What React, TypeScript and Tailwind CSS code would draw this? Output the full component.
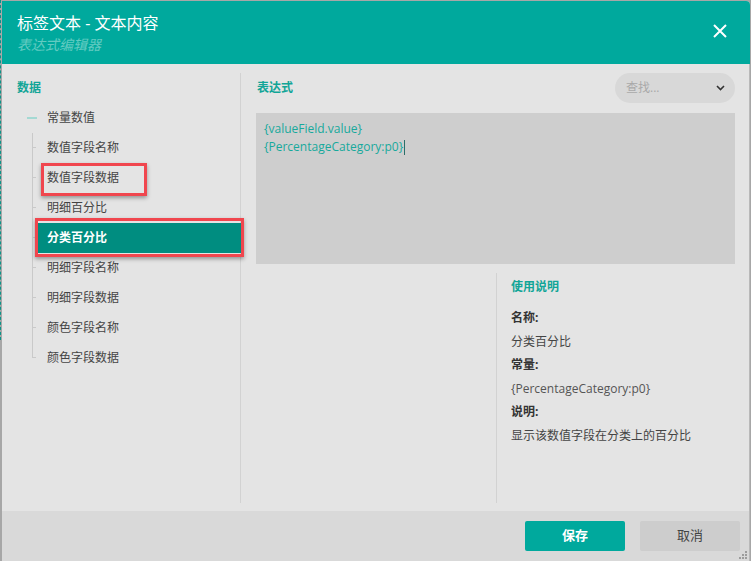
import React from 'react';

const items = [
  '数值字段名称',
  '数值字段数据',
  '明细百分比',
  '分类百分比',
  '明细字段名称',
  '明细字段数据',
  '颜色字段名称',
  '颜色字段数据',
];

function TreeItem({ label, selected, last }: { label: string; selected?: boolean; last?: boolean }) {
  return (
    <div className="flex h-[30px]">
      {/* connector */}
      <div className="ml-[30px] flex w-[4px] flex-col">
        <div className="h-[15px] border-b border-l border-[#c9c9c9]" />
        {!last && <div className="h-[15px] border-l border-[#c9c9c9]" />}
      </div>
      <div
        className={
          selected
            ? 'ml-[2px] -mr-[1px] flex flex-1 items-center bg-[#008d80] pl-[9px] text-[12px] font-bold text-white'
            : 'ml-[2px] flex flex-1 items-center pl-[9px] text-[12px] text-[#444]'
        }
      >
        {label}
      </div>
    </div>
  );
}

export default function App() {
  return (
    <div className="relative h-[561px] w-[751px] overflow-hidden bg-[#a7a7a7] font-['Open_Sans','Noto_Sans_CJK_SC',sans-serif]">
      {/* page behind the dialog */}
      <div className="absolute left-0 top-0 h-[340px] w-[2px] border-l border-dashed border-[#0a9488]" />

      <div className="ml-[2px] mt-[1px] flex h-[560px] w-[748px] flex-col overflow-hidden rounded-tr-[4px] bg-[#e4e4e4]">
        {/* header */}
        <div className="flex h-[63px] shrink-0 items-start justify-between bg-[#00a99d] pl-[15px] pr-[23px]">
          <div className="pt-[12px]">
            <div className="text-[16px] leading-[20px] text-white">标签文本 - 文本内容</div>
            <div className="mt-[2px] text-[14px] italic leading-[20px] text-[#62cbc1]">表达式编辑器</div>
          </div>
          <svg width="14" height="14" viewBox="0 0 14 14" className="mt-[23px]">
            <path d="M1 1 13 13M13 1 1 13" stroke="white" strokeWidth="2" />
          </svg>
        </div>

        {/* body */}
        <div className="flex flex-1 border-r border-[#b9b9b9] pb-[8px] pt-[9px]">
          {/* data tree */}
          <div className="w-[239px] shrink-0 border-r border-[#d2d2d2]">
            <div className="pl-[15px] pt-[7px] text-[12px] font-bold leading-[16px] text-[#12a597]">数据</div>
            <div className="mt-[7px]">
              <div className="flex h-[30px] items-center">
                <div className="ml-[25px] h-[2px] w-[10px] bg-[#a4d9d3]" />
                <div className="ml-[10px] text-[12px] text-[#444]">常量数值</div>
              </div>
              {items.map((label, i) => (
                <TreeItem key={label} label={label} selected={i === 3} last={i === items.length - 1} />
              ))}
            </div>
          </div>

          {/* expression */}
          <div className="flex flex-1 flex-col pl-[15px] pr-[14px]">
            <div className="flex h-[30px] items-center justify-between">
              <div className="pl-[1px] text-[12px] font-bold text-[#12a597]">表达式</div>
              <div className="flex h-[30px] w-[120px] items-center justify-between rounded-full bg-[#d8d8d8] pl-[11px] pr-[10px]">
                <span className="text-[12px] text-[#a9a9a9]">查找...</span>
                <svg width="9" height="6" viewBox="0 0 9 6">
                  <path d="M1 1 4.5 4.5 8 1" fill="none" stroke="#333" strokeWidth="1.6" />
                </svg>
              </div>
            </div>
            <div className="mt-[10px] h-[151px] bg-[#cecece] px-[8px] pt-[7px] text-[12px] leading-[18px] text-[#17a99c]">
              <div>{'{valueField.value}'}</div>
              <div className="flex items-center">
                {'{PercentageCategory:p0}'}
                <span className="ml-[1px] h-[15px] w-[1px] bg-[#2b6f69]" />
              </div>
            </div>
            <div className="mt-[9px] flex flex-1">
              <div className="w-[240px]" />
              <div className="flex-1 border-l border-[#d2d2d2] pl-[14px]">
                <div className="pt-[6px] text-[12px] font-bold leading-[16px] text-[#12a597]">使用说明</div>
                <div className="mt-[11px] text-[12px] leading-[23.5px] text-[#444]">
                  <div className="font-bold text-[#333]">名称:</div>
                  <div>分类百分比</div>
                  <div className="font-bold text-[#333]">常量:</div>
                  <div className="text-[#555]">{'{PercentageCategory:p0}'}</div>
                  <div className="font-bold text-[#333]">说明:</div>
                  <div>显示该数值字段在分类上的百分比</div>
                </div>
              </div>
            </div>
          </div>
        </div>

        {/* footer */}
        <div className="flex h-[50px] shrink-0 items-center justify-end gap-[15px] border-r border-[#b9b9b9] bg-[#d9d9d9] pr-[9px]">
          <button className="h-[30px] w-[100px] rounded-[2px] bg-[#00a99d] text-[13px] font-bold text-white">保存</button>
          <button className="h-[30px] w-[100px] rounded-[2px] bg-[#cdcdcd] text-[13px] text-[#444]">取消</button>
        </div>
      </div>

      {/* resize grip */}
      <svg width="10" height="10" viewBox="0 0 10 10" className="absolute bottom-[1px] right-[3px]">
        <rect x="7" y="1" width="2" height="2" fill="#9c9c9c" />
        <rect x="7" y="4" width="2" height="2" fill="#9c9c9c" />
        <rect x="4" y="4" width="2" height="2" fill="#9c9c9c" />
        <rect x="7" y="7" width="2" height="2" fill="#9c9c9c" />
        <rect x="4" y="7" width="2" height="2" fill="#9c9c9c" />
        <rect x="1" y="7" width="2" height="2" fill="#9c9c9c" />
      </svg>

      {/* annotation boxes */}
      <div className="absolute left-[41px] top-[163px] h-[33px] w-[106px] border-[3px] border-[#f0464e] shadow-[0_2px_4px_rgba(0,0,0,0.35)]" />
      <div className="absolute left-[35px] top-[218px] h-[39px] w-[209px] border-[3px] border-[#f0464e] shadow-[0_2px_4px_rgba(0,0,0,0.35)]" />
    </div>
  );
}
